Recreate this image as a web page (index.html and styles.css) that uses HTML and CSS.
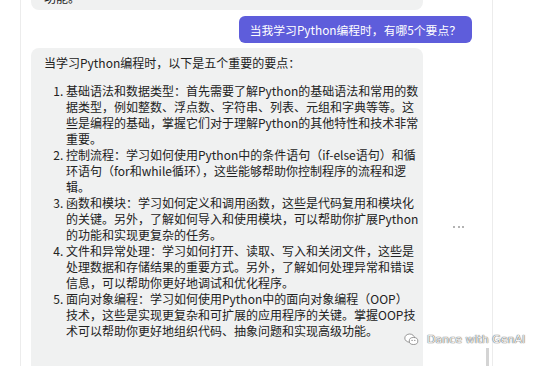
FILE: index.html
```html
<!DOCTYPE html>
<html lang="zh-CN">
<head>
  <meta charset="UTF-8">
  <meta name="viewport" content="width=device-width, initial-scale=1.0">
  <title>Python 学习要点</title>
  <link rel="stylesheet" href="styles.css">
</head>
<body>
  <div class="app">
    <div class="side"></div>
    <div class="chat">
      <div class="bubble bubble-prev">
        <p class="prev-text">功能。</p>
      </div>

      <div class="row row-user">
        <div class="bubble-user">当我学习Python编程时，有哪5个要点？</div>
      </div>

      <div class="row row-bot">
        <div class="bubble bubble-bot">
          <p>当学习Python编程时，以下是五个重要的要点：</p>
          <ol>
            <li>基础语法和数据类型：首先需要了解Python的基础语法和常用的数<br>据类型，例如整数、浮点数、字符串、列表、元组和字典等等。这<br>些是编程的基础，掌握它们对于理解Python的其他特性和技术非常<br>重要。</li>
            <li>控制流程：学习如何使用Python中的条件语句（if-else语句）和循<br>环语句（for和while循环），这些能够帮助你控制程序的流程和逻<br>辑。</li>
            <li>函数和模块：学习如何定义和调用函数，这些是代码复用和模块化<br>的关键。另外，了解如何导入和使用模块，可以帮助你扩展Python<br>的功能和实现更复杂的任务。</li>
            <li>文件和异常处理：学习如何打开、读取、写入和关闭文件，这些是<br>处理数据和存储结果的重要方式。另外，了解如何处理异常和错误<br>信息，可以帮助你更好地调试和优化程序。</li>
            <li>面向对象编程：学习如何使用Python中的面向对象编程（OOP）<br>技术，这些是实现更复杂和可扩展的应用程序的关键。掌握OOP技<br>术可以帮助你更好地组织代码、抽象问题和实现高级功能。</li>
          </ol>
        </div>
        <div class="more"><i></i><i></i><i></i></div>
      </div>

      <div class="scroll-thumb"></div>
    </div>
  </div>

  <div class="watermark">
    <svg class="wm-icon" viewBox="0 0 16 14" width="15" height="13">
      <ellipse cx="6" cy="5.5" rx="5.2" ry="4.4" fill="#fff" stroke="#777" stroke-width="0.8"/>
      <ellipse cx="10.2" cy="8.6" rx="4.6" ry="3.8" fill="#fff" stroke="#777" stroke-width="0.8"/>
      <circle cx="8.6" cy="8" r="0.6" fill="#777"/>
      <circle cx="11.6" cy="8" r="0.6" fill="#777"/>
    </svg>
    <span>Dance with GenAI</span>
  </div>
</body>
</html>
```

FILE: styles.css
```css
body {
  margin: 0;
  width: 553px;
  height: 366px;
  overflow: hidden;
  background: #fff;
  font-family: "Noto Sans CJK SC", "Noto Sans", sans-serif;
  color: #222;
}

.app {
  display: flex;
  height: 366px;
}

.side {
  width: 20px;
  border-right: 1px solid #ececec;
}

.chat {
  position: relative;
  width: 441px;
  padding: 0 20px 0 10px;
  border-right: 1px solid #ececec;
  display: flex;
  flex-direction: column;
}

.chat > * {
  flex-shrink: 0;
}

.bubble {
  background: #f0f1f1;
  border-radius: 8px;
  width: 366px;
  padding: 0 13px;
  font-size: 12px;
  line-height: 16px;
}

.bubble p {
  margin: 0;
}

.bubble-prev {
  height: 10px;
  overflow: hidden;
  border-radius: 0 0 8px 8px;
}

.prev-text {
  margin-top: -10px !important;
}

.row {
  display: flex;
}

.row-user {
  justify-content: flex-end;
  margin-top: 6px;
}

.bubble-user {
  background: #5e5ddb;
  color: #fff;
  border-radius: 6px;
  height: 27px;
  line-height: 27px;
  padding: 0 11px;
  font-size: 11.8px;
}

.row-bot {
  margin-top: 5px;
  align-items: center;
}

.bubble-bot {
  padding-top: 7px;
  padding-bottom: 60px;
}

.bubble-bot ol {
  margin: 12px 0 0;
  padding-left: 22px;
}

.bubble-bot li {
  white-space: nowrap;
}

.more {
  margin: 6px 0 0 30px;
  display: flex;
  gap: 2.5px;
}

.more i {
  width: 2px;
  height: 2px;
  border-radius: 50%;
  background: #9a9a9a;
}

.scroll-thumb {
  position: absolute;
  right: 3px;
  top: 348px;
  width: 3px;
  height: 20px;
  background: #d4d4d4;
}

.watermark {
  position: absolute;
  left: 404px;
  top: 333px;
  display: flex;
  align-items: center;
  gap: 8px;
  font-family: "DejaVu Sans", sans-serif;
  font-size: 11px;
  color: #f4f4f4;
  text-shadow: 0 0 1px #555, 0 0 1px #555;
}
```
